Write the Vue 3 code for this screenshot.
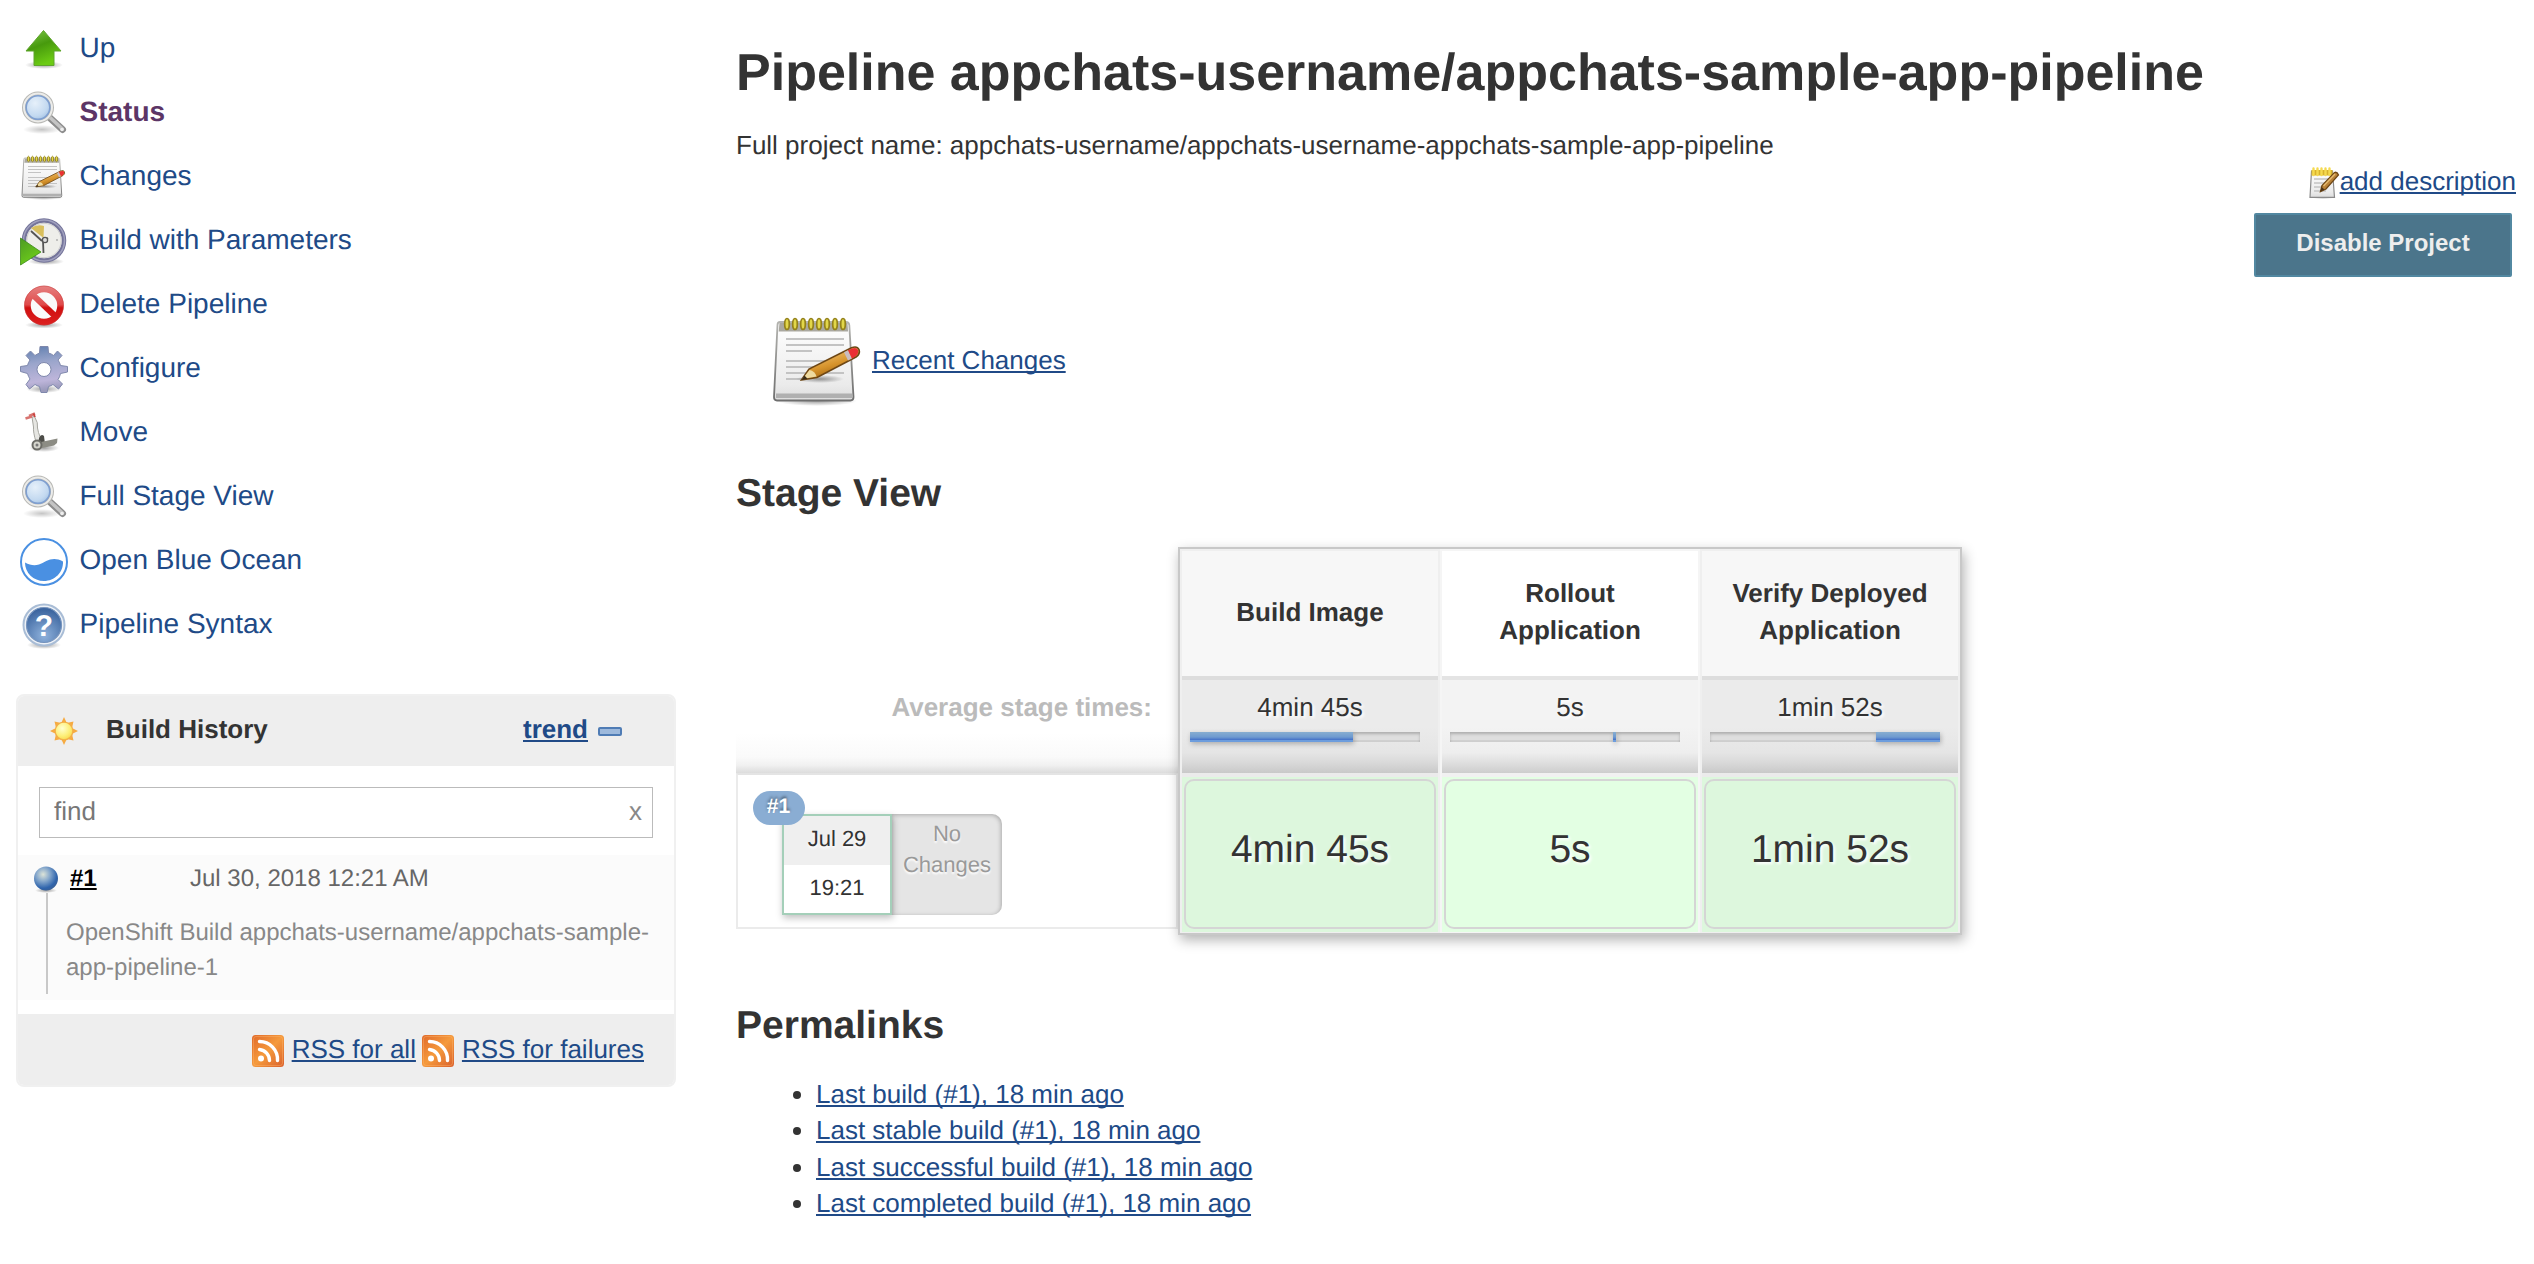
<script setup>
const tasks = [
  { icon: 'up', label: 'Up' },
  { icon: 'search', label: 'Status', active: true },
  { icon: 'notepad', label: 'Changes' },
  { icon: 'clock', label: 'Build with Parameters' },
  { icon: 'delete', label: 'Delete Pipeline' },
  { icon: 'gear', label: 'Configure' },
  { icon: 'move', label: 'Move' },
  { icon: 'search', label: 'Full Stage View' },
  { icon: 'ocean', label: 'Open Blue Ocean' },
  { icon: 'help', label: 'Pipeline Syntax' },
]
const stages = [
  { name: 'Build Image', time: '4min 45s', start: 0, width: 163 },
  { name: 'Rollout Application', time: '5s', start: 163, width: 3 },
  { name: 'Verify Deployed Application', time: '1min 52s', start: 166, width: 64 },
]
const permalinks = [
  'Last build (#1), 18 min ago',
  'Last stable build (#1), 18 min ago',
  'Last successful build (#1), 18 min ago',
  'Last completed build (#1), 18 min ago',
]
const rings = [0, 1, 2, 3, 4, 5, 6, 7]
</script>

<template>
  <svg class="defs" width="0" height="0" aria-hidden="true">
    <defs>
      <linearGradient id="gUp" x1="0" y1="0" x2="0.4" y2="1">
        <stop offset="0" stop-color="#7fc94b" /><stop offset="0.5" stop-color="#479a0d" /><stop offset="1" stop-color="#6ccb14" />
      </linearGradient>
      <linearGradient id="gPlay" x1="0" y1="0" x2="0.6" y2="1">
        <stop offset="0" stop-color="#4d9a22" /><stop offset="1" stop-color="#6fd01a" />
      </linearGradient>
      <radialGradient id="gGlass" cx="0.4" cy="0.35" r="0.75">
        <stop offset="0" stop-color="#e6f0fa" /><stop offset="0.6" stop-color="#c3d9f0" /><stop offset="1" stop-color="#8fb3dc" />
      </radialGradient>
      <linearGradient id="gPaper" x1="0" y1="0" x2="0" y2="1">
        <stop offset="0" stop-color="#ffffff" /><stop offset="0.8" stop-color="#ebebeb" /><stop offset="1" stop-color="#dcdcdc" />
      </linearGradient>
      <linearGradient id="gEdge" x1="0" y1="0" x2="0" y2="1">
        <stop offset="0" stop-color="#b4b4b0" /><stop offset="1" stop-color="#6e6e6e" />
      </linearGradient>
      <linearGradient id="gPencil" x1="0.3" y1="0.1" x2="0.7" y2="0.9">
        <stop offset="0.2" stop-color="#e9b45c" /><stop offset="0.55" stop-color="#d6932c" /><stop offset="0.9" stop-color="#a86a12" />
      </linearGradient>
      <radialGradient id="gShadow">
        <stop offset="0" stop-color="#000" stop-opacity="0.38" /><stop offset="1" stop-color="#000" stop-opacity="0" />
      </radialGradient>
      <linearGradient id="gRed" gradientUnits="userSpaceOnUse" x1="0" y1="4" x2="0" y2="43">
        <stop offset="0" stop-color="#e58080" /><stop offset="0.48" stop-color="#e04a4a" /><stop offset="0.56" stop-color="#d01010" /><stop offset="1" stop-color="#dc2020" />
      </linearGradient>
      <linearGradient id="gGear" x1="0" y1="0" x2="0.15" y2="1">
        <stop offset="0" stop-color="#5d7dae" /><stop offset="0.4" stop-color="#9aa5cb" /><stop offset="0.8" stop-color="#bdb5da" /><stop offset="1" stop-color="#9b9abb" />
      </linearGradient>
      <radialGradient id="gHelp" cx="0.5" cy="0.8" r="0.75">
        <stop offset="0" stop-color="#8fb2dc" /><stop offset="1" stop-color="#3c659f" />
      </radialGradient>
      <radialGradient id="gBall" cx="0.38" cy="0.33" r="0.72">
        <stop offset="0" stop-color="#dde4d8" /><stop offset="0.4" stop-color="#86a8cc" /><stop offset="0.8" stop-color="#2f64ac" /><stop offset="1" stop-color="#3a5f94" />
      </radialGradient>
      <radialGradient id="gSun" cx="0.4" cy="0.35" r="0.7">
        <stop offset="0" stop-color="#ffffd0" /><stop offset="0.6" stop-color="#fdf07c" /><stop offset="1" stop-color="#f9d94c" />
      </radialGradient>
      <linearGradient id="gRss" x1="0" y1="0" x2="1" y2="1">
        <stop offset="0" stop-color="#e0692a" /><stop offset="0.5" stop-color="#f59a3c" /><stop offset="1" stop-color="#d9602c" />
      </linearGradient>
      <symbol id="rss" viewBox="0 0 32 32">
        <rect width="32" height="32" rx="3.500" fill="url(#gRss)" />
        <rect x="1.500" y="1.500" width="29" height="29" rx="2.500" fill="none" stroke="#ffb870" stroke-opacity="0.400" />
        <g fill="none" stroke="#fff" stroke-width="3.400" stroke-linecap="round">
          <path d="M7.500 6.500A18 18 0 0 1 25.500 25.500" /><path d="M7.500 14.500A11 11 0 0 1 17.500 25.500" />
        </g>
        <circle cx="9" cy="23.500" r="3" fill="#fff" />
      </symbol>
      <symbol id="notepad" viewBox="0 0 96 96">
        <ellipse cx="47" cy="87" rx="40" ry="5" fill="url(#gShadow)" />
        <path d="M10 8H76Q79 8 79.300 11L83.500 83Q83.500 86.500 80.500 86.500H7Q4 86.500 4 83L7.500 11Q7.500 8 10 8Z" fill="url(#gPaper)" stroke="url(#gEdge)" stroke-width="1.800" />
        <path d="M9.500 9H77.500L78 17.500H8.700Z" fill="#aaa8a0" />
        <path d="M6 79.500H82V84H6Z" fill="#b0b0b0" />
        <path d="M16 25H74M16 31H74M16 37H42M16 47H60M16 53H54M16 59H74M16 65H36" stroke="#c3c3c3" stroke-width="2" />
        <g v-for="i in rings" :key="i">
          <ellipse :cx="17 + i * 8" cy="10" rx="2.300" ry="5.500" fill="#e2d74a" stroke="#94821a" stroke-width="1.700" />
        </g>
        <ellipse cx="50" cy="65" rx="24" ry="4" fill="url(#gShadow)" />
        <path d="M31.500 66L39 55L81 34Q87 31.500 89 35.500Q90.500 40 86 43L47 63.500Z" fill="url(#gPencil)" stroke="#6e4715" stroke-width="1.600" />
        <path d="M32.500 65L39.500 56Q45 57 46.500 62.500Z" fill="#eedaa0" />
        <path d="M31.500 66L34.500 61.500L37.500 64.800Z" fill="#3a2c18" />
        <path d="M74 38.200L78 36.200L82 44.500L78 46.500Z" fill="#c9bcc0" />
        <path d="M78 36.200L82 34.500Q86.500 33 88 36Q89 39.500 85.300 42.500L82 44.500Z" fill="#ea3034" />
      </symbol>
      <symbol id="smallpad" viewBox="0 0 32 32">
        <ellipse cx="15" cy="30.500" rx="13" ry="1.500" fill="url(#gShadow)" />
        <path d="M3.500 4H24.500L26.500 30.300H2Z" fill="url(#gPaper)" stroke="#8a8a8a" stroke-width="1.200" />
        <path d="M6 12H22M6 16H20M6 20H16M6 24H18" stroke="#c4c4c4" stroke-width="1.300" />
        <path d="M3.500 3H24.500V8.500H3.500Z" fill="#d9b22c" />
        <path d="M5.500 1.500V8M9.500 1.500V8M13.500 1.500V8M17.500 1.500V8M21.500 1.500V8" stroke="#f5da50" stroke-width="2.400" stroke-linecap="round" />
        <path d="M12.500 24.500L14 18.500L26.500 5.500Q29 4.500 30.500 8L18 22Z" fill="#b98238" stroke="#6e4715" stroke-width="1.300" />
        <path d="M12.500 24.500L13.600 20L16.500 22.500Z" fill="#4b3418" />
        <path d="M15.500 19L27 7" stroke="#e6bb70" stroke-width="1.500" />
      </symbol>
    </defs>
  </svg>

  <div class="page">
    <aside class="side">
      <nav class="tasks">
        <a v-for="t in tasks" :key="t.label" class="task" :class="{ active: t.active }">
          <svg class="task-icon" viewBox="0 0 48 48">
            <template v-if="t.icon === 'up'">
              <ellipse cx="24" cy="39" rx="19" ry="4" fill="url(#gShadow)" />
              <path d="M23.500 4.500L41 25H34V39.500H14V25H6Z" fill="url(#gUp)" stroke="#5fa52c" stroke-width="1" stroke-linejoin="round" />
            </template>
            <template v-else-if="t.icon === 'search'">
              <ellipse cx="22" cy="39.500" rx="19" ry="4.500" fill="url(#gShadow)" opacity="0.600" />
              <path d="M29.500 27.500L42.500 39.500" stroke="#8d8d8d" stroke-width="7" stroke-linecap="round" />
              <path d="M29.500 27L42.500 39" stroke="#c4c4c4" stroke-width="3.500" stroke-linecap="round" />
              <circle cx="42" cy="39.500" r="1.800" fill="#eee" />
              <circle cx="18" cy="17.500" r="14" fill="url(#gGlass)" stroke="#b8b8b4" stroke-width="4" />
              <circle cx="18" cy="17.500" r="14" fill="none" stroke="#ececea" stroke-width="2" />
              <circle cx="18" cy="17.500" r="11.800" fill="none" stroke="#7f9fd0" stroke-width="1.600" />
            </template>
            <use v-else-if="t.icon === 'notepad'" href="#notepad" width="48" height="48" />
            <template v-else-if="t.icon === 'clock'">
              <ellipse cx="26" cy="43.500" rx="18" ry="3.500" fill="url(#gShadow)" />
              <circle cx="24" cy="22.500" r="20" fill="#eeeeea" stroke="#74749a" stroke-width="4.500" />
              <circle cx="24" cy="22.500" r="20.500" fill="none" stroke="#a0a0be" stroke-width="1.500" />
              <circle cx="24" cy="22.500" r="17.200" fill="none" stroke="#cfcfd0" stroke-width="1" />
              <path d="M11 10Q17 6 24 8L23.500 20Z" fill="#d9bf5c" />
              <path d="M11 13L22 23M28 20L23 23L23.500 35" stroke="#555" stroke-width="1.800" fill="none" />
              <circle cx="25" cy="22" r="2.600" fill="#ddd" stroke="#555" stroke-width="1.300" />
              <circle cx="37" cy="22" r="0.900" fill="#aaa" />
              <path d="M0.500 20L21 34L0.500 47Z" fill="url(#gPlay)" stroke="#3b8a18" stroke-width="0.800" />
            </template>
            <template v-else-if="t.icon === 'delete'">
              <ellipse cx="24" cy="43" rx="19" ry="3.500" fill="url(#gShadow)" />
              <circle cx="24" cy="23.500" r="16.500" fill="#fafafa" stroke="url(#gRed)" stroke-width="6.500" />
              <path d="M12.500 12.500L35.500 34.500" stroke="url(#gRed)" stroke-width="6" />
              <circle cx="24" cy="23.500" r="19.500" fill="none" stroke="#c84040" stroke-opacity="0.500" stroke-width="1" />
            </template>
            <template v-else-if="t.icon === 'gear'">
              <ellipse cx="24" cy="43" rx="18" ry="4" fill="url(#gShadow)" />
              <path fill="url(#gGear)" stroke="#7f88ac" stroke-width="1" stroke-linejoin="round" fill-rule="evenodd" d="M20 0.500H28L28.500 7Q31.500 7.800 33.500 9.500L37.500 5L42 9.500L38 14Q40 17 40.500 19.500L47.500 20.500V26L40.500 27.500Q39.800 31 38 33.500L42.500 38L38.500 43L33 38.500Q31 39.800 28.500 40.500L27 46.500H21L19.500 40.500Q17 39.800 15 38.500L9.500 43L6 38.500L10 33Q8.300 30.500 7.500 27.500L0.500 25.500V20.500L7.500 19.500Q8.200 16.500 10 14L6 9.500L10.500 5L15 9.500Q17.500 7.800 19.500 7ZM24 16.500A7 7 0 1 0 24 30.500A7 7 0 1 0 24 16.500Z" />
            </template>
            <template v-else-if="t.icon === 'move'">
              <ellipse cx="24" cy="38" rx="15" ry="4" fill="url(#gShadow)" />
              <path d="M12 7L14.500 6.500Q18.500 13 17.500 18Q18 22 20.500 28L16 32Q13 22 13.500 17Z" fill="#e6e6e2" stroke="#a6a6a0" stroke-width="1" />
              <path d="M5.500 8.500L12 6.500M9 6L15 3.500" stroke="#d87470" stroke-width="2.600" />
              <path d="M13.500 3.500L15 7" stroke="#c8403c" stroke-width="1.800" />
              <path d="M19 28Q21 23.500 24 26L25 34H19Z" fill="#4c4c48" />
              <path d="M21 32L37.500 28.500L37 33L34 35.500L20 38.500Z" fill="#8c8c84" />
              <circle cx="17" cy="35" r="4.500" fill="#d4d4cc" stroke="#6b6b66" stroke-width="2" />
              <circle cx="17" cy="35" r="1.500" fill="#777" />
            </template>
            <template v-else-if="t.icon === 'ocean'">
              <circle cx="24" cy="24" r="23" fill="#fff" stroke="#4a90e2" stroke-width="2" />
              <path d="M5 24.500C10 27 14 28 19 26.500C26 24 32 17.500 43 23.500C43.500 34.500 34.500 43 24 43C13.500 43 5 35 5 24.500Z" fill="#4a90e2" />
            </template>
            <template v-else>
              <ellipse cx="24" cy="43" rx="17" ry="4" fill="url(#gShadow)" />
              <circle cx="24" cy="23" r="20.500" fill="#eef2f7" stroke="#a9bdd6" stroke-width="2" />
              <circle cx="24" cy="23" r="17.500" fill="url(#gHelp)" stroke="#7694bd" stroke-width="1.200" />
              <text x="24" y="34" text-anchor="middle" class="help-mark">?</text>
            </template>
          </svg>
          <span class="task-label">{{ t.label }}</span>
        </a>
      </nav>

      <section class="history">
        <header class="history-head">
          <svg class="sun" viewBox="0 0 32 32">
            <path d="M16 2L18.800 8L25.500 6.500L24 13L30 16L24 19L25.500 25.500L18.800 24L16 30L13.200 24L6.500 25.500L8 19L2 16L8 13L6.500 6.500L13.200 8Z" fill="#f6ab42" />
            <circle cx="16" cy="16" r="8.800" fill="url(#gSun)" stroke="#f3b04a" stroke-width="1.200" />
          </svg>
          <span class="history-title">Build History</span>
          <a class="trend">trend</a>
          <span class="collapse"></span>
        </header>
        <div class="find"><span>find</span><span class="clear">x</span></div>
        <div class="build">
          <div class="rail">
            <svg class="ball" viewBox="0 0 28 28">
              <ellipse cx="14" cy="25.500" rx="11" ry="2.500" fill="url(#gShadow)" />
              <circle cx="14" cy="13.500" r="12" fill="url(#gBall)" />
            </svg>
            <span class="rail-line"></span>
          </div>
          <div class="build-body">
            <div class="build-top"><a class="build-no">#1</a><span class="build-date">Jul 30, 2018 12:21 AM</span></div>
            <div class="build-desc">OpenShift Build appchats-username/appchats-sample-<br />app-pipeline-1</div>
          </div>
        </div>
        <footer class="history-foot">
          <svg class="rss"><use href="#rss" /></svg><a>RSS for all</a>
          <svg class="rss second"><use href="#rss" /></svg><a>RSS for failures</a>
        </footer>
      </section>
    </aside>

    <main class="main">
      <h1>Pipeline appchats-username/appchats-sample-app-pipeline</h1>
      <p class="full-name">Full project name: appchats-username/appchats-username-appchats-sample-app-pipeline</p>
      <div class="describe"><svg class="describe-icon"><use href="#smallpad" /></svg><a>add description</a></div>
      <button class="disable">Disable Project</button>
      <div class="recent"><svg class="recent-icon"><use href="#notepad" /></svg><a>Recent Changes</a></div>

      <h2 class="stage-title">Stage View</h2>
      <div class="stage-view">
        <div class="legend">
          <div class="average">Average stage times:</div>
          <div class="run">
            <div class="stamp">
              <span class="badge">#1</span>
              <span class="day">Jul 29</span>
              <span class="hour">19:21</span>
            </div>
            <div class="no-changes">No<br />Changes</div>
          </div>
        </div>
        <div class="stages">
          <div v-for="s in stages" :key="s.name" class="stage">
            <div class="stage-head"><span>{{ s.name }}</span></div>
            <div class="stage-avg">
              <span>{{ s.time }}</span>
              <div class="bar"><i :style="{ marginLeft: s.start + 'px', width: s.width + 'px' }"></i></div>
            </div>
            <div class="stage-cell"><div class="card">{{ s.time }}</div></div>
          </div>
        </div>
      </div>

      <h2 class="perma-title">Permalinks</h2>
      <ul class="perma">
        <li v-for="p in permalinks" :key="p"><a>{{ p }}</a></li>
      </ul>
    </main>
  </div>
</template>

<style>
body { background: #fff; overflow: hidden; }
</style>

<style scoped>
* { box-sizing: border-box; }
.defs { position: absolute; }
.page {
  display: flex;
  width: 2534px;
  height: 1264px;
  overflow: hidden;
  color: #333;
  font-family: "Liberation Sans", Arial, Helvetica, sans-serif;
  font-size: 26px;
  text-rendering: geometricPrecision;
}
a {
  color: #204a87;
  text-decoration: underline;
  text-decoration-thickness: 1.5px;
  text-underline-offset: 2px;
  text-decoration-skip-ink: none;
  white-space: nowrap;
}
svg { display: block; flex: none; }
.side { width: 676px; padding: 18px 0 0 16px; flex: none; }
.tasks { padding-left: 4px; }
.task { display: flex; align-items: center; height: 64px; font-size: 28px; text-decoration: none; }
.task.active { color: #5c3566; font-weight: bold; }
.task-icon { width: 48px; height: 48px; overflow: visible; }
.task-label { margin-left: 11.500px; padding-bottom: 5px; }
.help-mark { font-size: 30px; font-weight: bold; fill: #fff; }

.history {
  height: 393px;
  margin-top: 36px;
  border: 2px solid #f0f0f0;
  border-radius: 8px;
  overflow: hidden;
  display: flex;
  flex-direction: column;
}
.history-head { height: 70px; background: #eee; display: flex; align-items: center; padding: 0 52px 0 30px; flex: none; font-weight: bold; }
.sun { width: 32px; height: 32px; }
.history-title { margin-left: 26px; padding-bottom: 4px; }
.trend { margin-left: auto; padding-bottom: 4px; }
.collapse { width: 24px; height: 9px; margin-left: 10px; background: #9db9dc; border: 2px solid #4f7cb5; border-radius: 2px; }
.find {
  height: 51px;
  margin: 21px 21px 17px;
  border: 1px solid #bbb;
  display: flex;
  justify-content: space-between;
  align-items: center;
  padding: 0 10px 3px 14px;
  color: #777;
  flex: none;
}
.clear { color: #888; }
.build { display: flex; height: 145px; background: #fbfbfb; flex: none; }
.rail { width: 28px; margin-left: 14px; padding-top: 10px; display: flex; flex-direction: column; align-items: center; }
.ball { width: 28px; height: 28px; }
.rail-line { width: 2px; height: 101px; background: #c8c8c8; margin-left: 2px; }
.build-body { font-size: 24px; line-height: 34.300px; padding-top: 7px; margin-left: 6px; }
.build-top { display: flex; margin-left: 4px; }
.build-no { color: #000; font-weight: bold; width: 26px; }
.build-date { color: #666; margin-left: 94px; }
.build-desc { margin-top: 20px; color: #888; white-space: nowrap; }
.history-foot { height: 73px; margin-top: 14px; background: #eee; display: flex; align-items: center; justify-content: flex-end; padding: 0 30px 3px 0; flex: none; }
.rss { width: 32px; height: 32px; margin: 3px 7.500px 0 0; }
.rss.second { margin-left: 6.500px; }

.main { width: 1798px; margin-left: 60px; padding: 43px 18px 0 0; flex: none; display: flex; flex-direction: column; align-items: flex-start; }
h1, h2, p, ul { margin: 0; }
h1 { font-size: 52px; line-height: 60px; }
.full-name { margin-top: 24px; line-height: 36px; }
.describe { align-self: flex-end; display: flex; height: 36px; line-height: 36px; }
.describe-icon { width: 32px; height: 32px; margin-top: 4px; }
.disable {
  align-self: flex-end;
  width: 258px;
  height: 64px;
  margin: 14px 4px 0 0;
  padding: 0 0 4px;
  border: 2px solid #5288a1;
  border-radius: 2px;
  background: #4b758b;
  color: #eee;
  font: bold 24px "Liberation Sans", Arial, sans-serif;
}
.recent { display: flex; align-items: center; margin: 37px 0 0 34px; height: 96px; }
.recent-icon { width: 96px; height: 96px; }
.recent a { margin-left: 6px; padding-bottom: 4px; }
.stage-title, .perma-title { font-size: 39px; line-height: 51px; }
.stage-title { margin-top: 58px; }

.stage-view { display: flex; margin-top: 28px; height: 388px; flex: none; }
.legend { width: 442px; }
.average {
  height: 226px;
  padding: 145px 26px 0 0;
  text-align: right;
  font-weight: bold;
  color: #bbb;
  background: linear-gradient(to top, #dcdcdc, #f1f1f1 8px, #fafafa 16px, #fff 40px);
}
.run { display: flex; height: 156px; border: 2px solid #ebebeb; border-top-color: #e4e4e4; padding: 39px 0 0 44px; font-size: 22px; }
.stamp {
  position: relative;
  z-index: 1;
  width: 110px;
  height: 101px;
  border: 2px solid #a4cfb9;
  background: #fff;
  text-align: center;
  box-shadow: 1px 3px 7px rgba(0, 0, 0, 0.25);
}
.stamp .day, .stamp .hour { display: block; height: 49px; line-height: 45px; text-shadow: 0 2px 3px #fff; }
.stamp .day { background: #efefef; }
.badge {
  position: absolute;
  left: -31px;
  top: -25px;
  width: 52px;
  height: 34px;
  border-radius: 17px;
  background: #8aadd3;
  color: #fff;
  font-size: 21px;
  font-weight: bold;
  line-height: 31px;
  padding-right: 1px;
  text-shadow: 0 -2px 3px rgba(0, 0, 0, 0.45);
}
.no-changes {
  width: 110px;
  height: 101px;
  padding-top: 4px;
  border-radius: 0 10px 10px 0;
  background: #e5e5e5;
  box-shadow: inset -1px 1px 4px rgba(0, 0, 0, 0.25);
  color: #999;
  line-height: 31px;
  text-align: center;
  text-shadow: 0 2px 2px #fff;
}
.stages { display: flex; border: 2px solid #c8c8c8; box-shadow: 2px 5px 12px rgba(0, 0, 0, 0.3); background: #fff; }
.stage { width: 260px; border: solid #efefef; border-width: 2px 2px 3px; background: #f7f7f7; }
.stage:nth-child(2) { background: #fff; border-color: #f5f5f5; }
.stage-head {
  height: 129px;
  padding-bottom: 3px;
  border-bottom: 4px solid #ddd;
  display: flex;
  align-items: center;
  justify-content: center;
  text-align: center;
  font-weight: bold;
  line-height: 37px;
}
.stage-head span { width: 200px; }
.stage:nth-child(2) .stage-head { border-color: #e4e4e4; }
.stage-avg { height: 93px; padding: 12px 8px 0; text-align: center; line-height: 30px; background: linear-gradient(#ebebeb 50%, #e5e5e5 78%, #dadada 88%, #c9c9c9); text-shadow: 2px 2px 3px #fff; }
.stage-avg span { display: block; }
.stage:nth-child(2) .stage-avg { background: linear-gradient(#f3f3f3 50%, #eeeeee 78%, #e0e0e0 88%, #cdcdcd); }
.bar { width: 230px; height: 10px; margin-top: 10px; background: #dedede; box-shadow: inset 0 2px 3px rgba(0, 0, 0, 0.22), inset 0 -2px 0 #d0d0d0; }
.bar i { display: block; height: 10px; background: linear-gradient(#87add0, #6f9bd0 50%, #4370c8 8px, #6d9ddd 8px); box-shadow: 1px 2px 5px rgba(0, 0, 0, 0.25); }
.stage-cell { height: 159px; padding: 2px; border-top: 4px solid #ebebeb; background: #ddf7dd; }
.stage:nth-child(2) .stage-cell { background: #e3ffe3; border-color: #f1f1f1; }
.card { height: 150px; border: 2px solid #d5d5d5; border-radius: 10px; font-size: 39px; line-height: 134px; text-align: center; text-shadow: 2px 2px 3px #fff; padding-top: 2px; }

.perma-title { margin-top: 65px; }
.perma { margin-top: 25px; padding-left: 80px; line-height: 36.400px; }
</style>
